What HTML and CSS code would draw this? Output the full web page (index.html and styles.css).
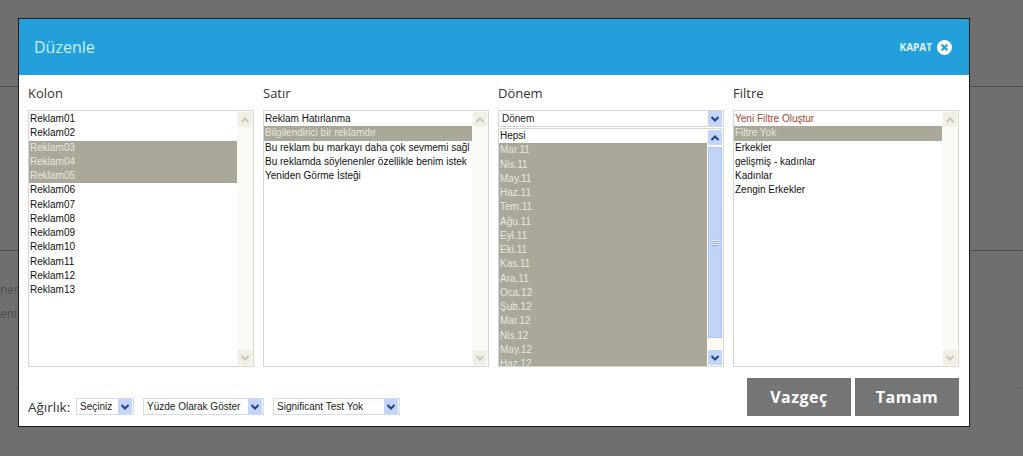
FILE: index.html
```html
<!DOCTYPE html>
<html lang="en">
<head>
  <meta charset="UTF-8" />
  <title>Düzenle</title>
  <link rel="stylesheet" href="styles.css">
</head>
<body>

  <svg class="defs" width="0" height="0">
    <symbol id="chev-up" viewBox="0 0 10 8"><path d="M1.5 6 L5 2.5 L8.5 6" fill="none" stroke="currentColor" stroke-width="2"/></symbol>
    <symbol id="chev-down" viewBox="0 0 10 8"><path d="M1.5 2 L5 5.5 L8.5 2" fill="none" stroke="currentColor" stroke-width="2"/></symbol>
  </svg>

  <div class="backdrop">
    <div class="bg-line first"></div>
    <div class="bg-line second"></div>
    <div class="bg-text one">ner</div>
    <div class="bg-text">eni</div>
    <div class="bg-dots"></div>
  </div>

  <div class="modal">
    <div class="modal-head">
      <span class="modal-title">Düzenle</span>
      <span class="close">KAPAT
        <svg class="close-icon" viewBox="0 0 16 16"><circle cx="8" cy="8" r="8" fill="#fff"/><path d="M5 5 L11 11 M11 5 L5 11" stroke="#23a0dc" stroke-width="2.4"/></svg>
      </span>
    </div>

    <div class="columns">
      <div class="col">
        <div class="col-title">Kolon</div>
        <div class="listbox tall">
          <div class="rows">
            <div class="row">Reklam01</div>
            <div class="row">Reklam02</div>
            <div class="row sel">Reklam03</div>
            <div class="row sel">Reklam04</div>
            <div class="row sel">Reklam05</div>
            <div class="row">Reklam06</div>
            <div class="row">Reklam07</div>
            <div class="row">Reklam08</div>
            <div class="row">Reklam09</div>
            <div class="row">Reklam10</div>
            <div class="row">Reklam11</div>
            <div class="row">Reklam12</div>
            <div class="row">Reklam13</div>
          </div>
          <div class="scroll off">
            <span class="sbtn"><svg><use href="#chev-up"/></svg></span>
            <span class="sbtn"><svg><use href="#chev-down"/></svg></span>
          </div>
        </div>
      </div>

      <div class="col">
        <div class="col-title">Satır</div>
        <div class="listbox tall">
          <div class="rows">
            <div class="row">Reklam Hatırlanma</div>
            <div class="row sel">Bilgilendirici bir reklamdır</div>
            <div class="row">Bu reklam bu markayı daha çok sevmemi sağl</div>
            <div class="row">Bu reklamda söylenenler özellikle benim istek</div>
            <div class="row">Yeniden Görme İsteği</div>
          </div>
          <div class="scroll off">
            <span class="sbtn"><svg><use href="#chev-up"/></svg></span>
            <span class="sbtn"><svg><use href="#chev-down"/></svg></span>
          </div>
        </div>
      </div>

      <div class="col">
        <div class="col-title">Dönem</div>
        <div class="combo wide">
          <span>Dönem</span>
          <span class="sbtn on"><svg><use href="#chev-down"/></svg></span>
        </div>
        <div class="listbox short">
          <div class="rows flush">
            <div class="row">Hepsi</div>
            <div class="row sel">Mar.11</div>
            <div class="row sel">Nis.11</div>
            <div class="row sel">May.11</div>
            <div class="row sel">Haz.11</div>
            <div class="row sel">Tem.11</div>
            <div class="row sel">Ağu.11</div>
            <div class="row sel">Eyl.11</div>
            <div class="row sel">Eki.11</div>
            <div class="row sel">Kas.11</div>
            <div class="row sel">Ara.11</div>
            <div class="row sel">Oca.12</div>
            <div class="row sel">Şub.12</div>
            <div class="row sel">Mar.12</div>
            <div class="row sel">Nis.12</div>
            <div class="row sel">May.12</div>
            <div class="row sel">Haz.12</div>
          </div>
          <div class="scroll">
            <span class="sbtn on"><svg><use href="#chev-up"/></svg></span>
            <span class="thumb"><span class="grip"></span></span>
            <span class="sbtn on"><svg><use href="#chev-down"/></svg></span>
          </div>
        </div>
      </div>

      <div class="col">
        <div class="col-title">Filtre</div>
        <div class="listbox tall">
          <div class="rows">
            <div class="row new">Yeni Filtre Oluştur</div>
            <div class="row sel">Filtre Yok</div>
            <div class="row">Erkekler</div>
            <div class="row">gelişmiş - kadınlar</div>
            <div class="row">Kadınlar</div>
            <div class="row">Zengin Erkekler</div>
          </div>
          <div class="scroll off">
            <span class="sbtn"><svg><use href="#chev-up"/></svg></span>
            <span class="sbtn"><svg><use href="#chev-down"/></svg></span>
          </div>
        </div>
      </div>
    </div>

    <div class="modal-foot">
      <div class="options">
        <span class="weight">Ağırlık:</span>
        <div class="combo w-58"><span>Seçiniz</span><span class="sbtn on"><svg><use href="#chev-down"/></svg></span></div>
        <div class="combo w-121"><span>Yüzde Olarak Göster</span><span class="sbtn on"><svg><use href="#chev-down"/></svg></span></div>
        <div class="combo w-127"><span>Significant Test Yok</span><span class="sbtn on"><svg><use href="#chev-down"/></svg></span></div>
      </div>
      <div class="actions">
        <button class="btn">Vazgeç</button>
        <button class="btn">Tamam</button>
      </div>
    </div>
  </div>

</body>
</html>
```

FILE: styles.css
```css
html, body {
  margin: 0;
  height: 456px;
  overflow: hidden;
}
body {
  background: #6f6f6f;
  font-family: "Liberation Sans", Arial, sans-serif;
  position: relative;
}
.defs {
  display: block;
  height: 0;
}
.backdrop {
  padding-top: 86px;
}
.bg-line {
  height: 1px;
  background: #4f4f4f;
}
.bg-line.second {
  margin-top: 163px;
}
.bg-text {
  font-family: "Open Sans", sans-serif;
  font-size: 12px;
  line-height: 18px;
  color: #4d4d4d;
  margin-top: 6px;
}
.bg-text.one {
  margin-top: 30px;
}
.bg-dots {
  margin-top: 65px;
  border-top: 1px dotted #5c5c5c;
}
.modal {
  position: absolute;
  left: 18px;
  top: 18px;
  width: 950px;
  height: 407px;
  background: #fff;
  border: 1px solid #1a1a1a;
  display: flex;
  flex-direction: column;
}
.modal-head {
  height: 56px;
  flex: none;
  background: #23a0dc;
  display: flex;
  align-items: center;
  justify-content: space-between;
  padding: 0 17px 0 15px;
}
.modal-title {
  font-family: "Open Sans", sans-serif;
  font-size: 16px;
  color: #c9f0f8;
}
.close {
  display: flex;
  align-items: center;
  gap: 5px;
  font-family: "Open Sans", sans-serif;
  font-size: 10px;
  font-weight: bold;
  color: #e4f4fb;
}
.close-icon {
  flex: none;
  width: 15px;
  height: 15px;
}
.columns {
  display: grid;
  grid-template-columns: repeat(4, 226px);
  column-gap: 9px;
  padding: 0 9px;
}
.col-title {
  font-family: "Open Sans", sans-serif;
  font-size: 13px;
  line-height: 18px;
  color: #333;
  padding-top: 9px;
  height: 26px;
}
.listbox {
  display: flex;
  box-sizing: border-box;
  border: 1px solid #d6d6d2;
  overflow: hidden;
}
.listbox.tall {
  height: 257px;
}
.listbox.short {
  height: 239px;
  margin-top: 1px;
}
.rows {
  flex: 1;
  min-width: 0;
  padding-top: 1px;
}
.rows.flush {
  padding-top: 0;
}
.row {
  height: 14.25px;
  line-height: 14px;
  font-size: 10px;
  padding-left: 1px;
  color: #111;
  white-space: nowrap;
  overflow: hidden;
}
.row.sel {
  background: #aba89a;
  color: #e8e6dc;
}
.row.new {
  color: #a5452a;
}
.scroll {
  width: 16px;
  flex: none;
  display: flex;
  flex-direction: column;
  justify-content: space-between;
  background: #fbfbf5;
  padding: 1px;
  box-sizing: border-box;
}
.sbtn {
  flex: none;
  width: 14px;
  height: 15px;
  display: flex;
  align-items: center;
  justify-content: center;
  background: #c3d5fb;
  color: #24407e;
  border-radius: 1px;
}
.sbtn svg {
  width: 10px;
  height: 8px;
}
.scroll.off .sbtn {
  background: #f1efe4;
  color: #c9c8bd;
}
.thumb {
  flex: 1;
  margin: 2px 0 12px;
  width: 14px;
  background: #c0d3f9;
  border: 1px solid #adc4f2;
  box-sizing: border-box;
  display: flex;
  align-items: center;
  justify-content: center;
}
.grip {
  width: 6px;
  height: 6px;
  background: repeating-linear-gradient(#eef3fd 0 1px, #8fa9dd 1px 2px);
}
.combo {
  display: flex;
  align-items: center;
  justify-content: space-between;
  box-sizing: border-box;
  height: 17px;
  border: 1px solid #d3dbe8;
  font-size: 10px;
  color: #222;
  padding: 0 1px 0 3px;
  white-space: nowrap;
}
.combo.wide {
  width: 226px;
  border-color: #d6d6d2;
}
.combo.w-58 {
  width: 58px;
}
.combo.w-121 {
  width: 121px;
}
.combo.w-127 {
  width: 127px;
}
.modal-foot {
  display: flex;
  justify-content: space-between;
  padding: 11px 10px 0 9px;
}
.options {
  display: flex;
  align-items: center;
  padding-top: 20px;
  height: 17px;
}
.weight {
  font-family: "Open Sans", sans-serif;
  font-size: 13.5px;
  color: #333;
  width: 48px;
}
.options .combo + .combo {
  margin-left: 9px;
}
.actions {
  display: flex;
  gap: 4px;
}
.btn {
  width: 104px;
  height: 38px;
  border: none;
  background: #757575;
  color: #fff;
  font-family: "Open Sans", sans-serif;
  font-weight: bold;
  font-size: 16px;
  letter-spacing: 0.5px;
  padding: 0;
}
```
